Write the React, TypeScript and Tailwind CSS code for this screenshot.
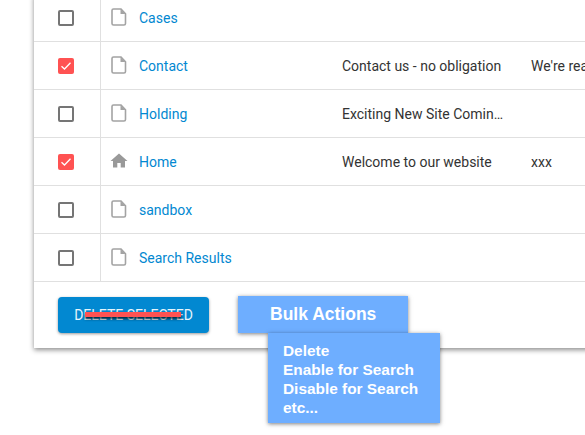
import React from "react";

const File = () => (
  <svg width="16" height="18" viewBox="0 0 16 18" fill="none" className="block">
    <path d="M2.5 1h7.5l4.5 4.8V15.5a1.5 1.5 0 0 1-1.5 1.5H2.5A1.5 1.5 0 0 1 1 15.5V2.5A1.5 1.5 0 0 1 2.5 1z" stroke="#a3a3a3" strokeWidth="1.6" fill="#fff" />
    <path d="M9.5 1v5h5z" fill="#a3a3a3" />
  </svg>
);
const Home = () => (
  <svg width="18" height="15" viewBox="0 0 18 15" className="block">
    <path d="M9 0.5 0.5 8H3v6.5h4.3V10h3.4v4.5H15V8h2.5z" fill="#999" />
  </svg>
);
const Check = ({ on }: { on: boolean }) =>
  on ? (
    <div className="w-4 h-4 rounded-[2px] bg-[#ff5252] flex items-center justify-center">
      <svg width="12" height="10" viewBox="0 0 12 10" fill="none">
        <path d="M1.5 5.2 4.5 8 10.5 1.8" stroke="#fff" strokeWidth="1.3" />
      </svg>
    </div>
  ) : (
    <div className="w-4 h-4 rounded-[2px] border-2 border-[#757575]" />
  );

const rows = [
  { name: "Cases", on: false, title: "", text: "", home: false },
  { name: "Contact", on: true, title: "Contact us - no obligation", text: "We're ready to help you with your", home: false },
  { name: "Holding", on: false, title: "Exciting New Site Comin…", text: "", home: false },
  { name: "Home", on: true, title: "Welcome to our website", text: "xxx", home: true },
  { name: "sandbox", on: false, title: "", text: "", home: false },
  { name: "Search Results", on: false, title: "", text: "", home: false },
];

export default function App() {
  return (
    <div className="relative w-[585px] h-[435px] overflow-hidden bg-white font-['Roboto',sans-serif] text-sm">
      <div className="ml-[34px] w-[600px] -mt-[6px] bg-white shadow-[0_2px_5px_rgba(0,0,0,0.45)]">
        {rows.map((r) => (
          <div key={r.name} className="flex h-[48px] border-b border-[#e0e0e0]">
            <div className="w-[67px] border-r border-[#e0e0e0] flex items-center justify-center pr-[2px]">
              <Check on={r.on} />
            </div>
            <div className="w-[241px] flex items-center">
              <div className="w-[38px] flex justify-center -translate-x-[1px] -translate-y-[1px]">
                {r.home ? <Home /> : <File />}
              </div>
              <span className="text-[#0288d1]">{r.name}</span>
            </div>
            <div className="w-[189px] flex items-center text-[#333333] whitespace-nowrap">{r.title}</div>
            <div className="flex-1 flex items-center text-[#333333] whitespace-nowrap overflow-hidden">{r.text}</div>
          </div>
        ))}
        <div className="h-[66px] pt-[15px] pl-[24px]">
          <button className="relative w-[151px] h-[36px] rounded-[4px] bg-[#0288d1] text-[#e6f4fb] text-sm shadow-[0_1px_3px_rgba(0,0,0,0.4)]">
            DELETE SELECTED
            <span className="absolute left-[27px] top-[15px] w-[96px] h-[5px] bg-[#ff5252] shadow-[0_2px_3px_rgba(0,0,0,0.7)]" />
          </button>
        </div>
      </div>
      <div className="absolute left-[238px] top-[296px] w-[170px] h-[37px] bg-[#6eaeff] shadow-[0_1px_4px_rgba(0,0,0,0.5)] text-white font-bold font-['Liberation_Sans',sans-serif] text-[17.5px] pl-[32px] flex items-center">
        Bulk Actions
      </div>
      <div className="absolute left-[268px] top-[333px] w-[172px] h-[90px] bg-[#6eaeff] shadow-[0_1px_4px_rgba(0,0,0,0.5)] text-white font-bold font-['Liberation_Sans',sans-serif] text-[15.4px] leading-[19px] pl-[15px] pt-[8px] whitespace-nowrap">
        <div>Delete</div>
        <div>Enable for Search</div>
        <div>Disable for Search</div>
        <div>etc...</div>
      </div>
    </div>
  );
}
